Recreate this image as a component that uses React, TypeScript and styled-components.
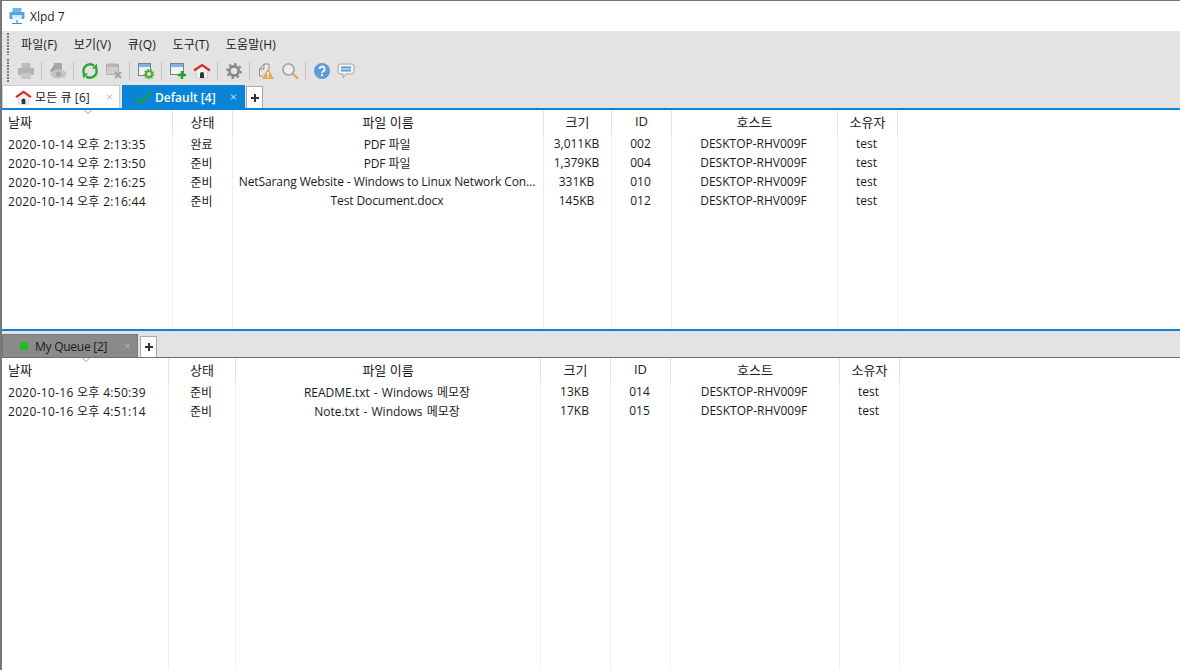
import React from "react";
import styled, { createGlobalStyle } from "styled-components";

const Global = createGlobalStyle`
  html, body { margin: 0; padding: 0; height: 100%; background: #fff; overflow: hidden; }
  #root { height: 100%; }
  * { box-sizing: border-box; }
`;

const Window = styled.div`
  width: 1180px; height: 670px; display: flex; flex-direction: column;
  border-top: 1px solid #777; border-left: 2px solid #777;
  font-family: "Open Sans", "Noto Sans CJK KR", sans-serif; font-size: 12px; color: #1a1a1a;
  background: #fff;
`;
const TitleBar = styled.div`
  height: 30px; display: flex; align-items: center; padding-left: 7px; gap: 5px; font-size: 12px; background: #fff;
`;
const MenuBar = styled.div`
  height: 26px; background: #e3e3e3; display: flex; align-items: center; position: relative; padding-left: 19px; gap: 16.5px;
`;
const Grip = styled.span`
  position: absolute; left: 5px; top: 2px; bottom: 2px; width: 2px;
  background: repeating-linear-gradient(to bottom, #777 0 2px, transparent 2px 3px);
`;
const MenuItem = styled.span` font-size: 12px; letter-spacing: 0.2px; `;
const ToolBar = styled.div`
  height: 28px; background: #e3e3e3; display: flex; align-items: center; position: relative; padding-left: 12px;
`;
const ToolIcon = styled.span`
  width: 24px; height: 20px; display: flex; align-items: center; justify-content: center; flex: none;
`;
const ToolSep = styled.span`
  width: 1px; height: 18px; background: #c6c6c6; margin: 0 4px 0 3px; flex: none;
`;
const TabStrip = styled.div<{ $h: number; $line: string; $lh: number }>`
  height: ${p => p.$h}px; background: #e3e3e3; display: flex; align-items: flex-end;
  border-bottom: ${p => p.$lh}px solid ${p => p.$line}; gap: 2px; flex: none;
`;
const Tab = styled.div<{ $w: number; $bg: string; $fg: string; $bold?: boolean; $h: number; $pl: number; $border?: string; $ls?: number }>`
  width: ${p => p.$w}px; height: ${p => p.$h}px; background: ${p => p.$bg}; color: ${p => p.$fg};
  font-weight: ${p => (p.$bold ? 600 : 400)}; display: flex; align-items: center; position: relative; padding-left: ${p => p.$pl}px; gap: 3px;
  border: 1px solid ${p => p.$border ?? p.$bg}; border-bottom: none; flex: none; font-size: 12px;
  letter-spacing: ${p => p.$ls ?? 0}px;
`;
const TabClose = styled.svg<{ $r: number }>`
  position: absolute; right: ${p => p.$r}px; top: 50%; transform: translateY(-50%);
`;
const AddTab = styled.div<{ $h: number; $ml: number }>`
  width: 17px; height: ${p => p.$h}px; background: #fff; border: 1px solid #aaa; border-bottom: none; flex: none; margin-left: ${p => p.$ml}px;
  display: flex; align-items: center; justify-content: center;
`;
const Dot = styled.span`
  width: 8px; height: 8px; border-radius: 50%; background: #14c414; margin-right: 4px; flex: none;
`;
const Table = styled.div<{ $h: number }>`
  height: ${p => p.$h}px; display: flex; background: #fff; flex: none;
`;
const Column = styled.div<{ $w: number }>`
  width: ${p => p.$w}px; flex: none; border-right: 1px solid #e6f1fa; display: flex; flex-direction: column; position: relative;
`;
const HeaderCell = styled.div<{ $align: string; $h: number }>`
  height: ${p => p.$h}px; margin-right: -1px; border-right: 1px solid #e3e3e3; display: flex; align-items: center;
  justify-content: ${p => p.$align}; padding: 0 6px 2px; flex: none; color: #222; font-size: 13px;
`;
const Cell = styled.div<{ $first: boolean; $ls: number; $ws: number }>`
  height: 19px; display: flex; align-items: center; justify-content: ${p => (p.$first ? "flex-start" : "center")};
  padding: 0 ${p => (p.$first ? 6 : 8)}px 0 6px; white-space: pre; overflow: hidden; flex: none;
  letter-spacing: ${p => p.$ls}px; word-spacing: ${p => p.$ws}px;
`;
const Chevron = styled.svg<{ $x: number }>`
  position: absolute; left: ${p => p.$x}px; top: 0;
`;
const Divider = styled.div`
  height: 2px; background: #0a84d8; flex: none;
`;

const Printer = () => (
  <svg width="18" height="18" viewBox="0 0 18 18">
    <rect x="4.5" y="1" width="9" height="5" fill="#bdbdbd" />
    <rect x="1" y="6" width="16" height="7" rx="1" fill="#b3b3b3" />
    <rect x="4" y="11" width="10" height="6" fill="#c8c8c8" />
  </svg>
);
const Hide = () => (
  <svg width="18" height="18" viewBox="0 0 18 18">
    <path d="M5 1h8v8H5z" fill="#a8a8a8" />
    <path d="M1 9l4-6v9z" fill="#a0a0a0" />
    <ellipse cx="9.5" cy="12" rx="8" ry="4.5" fill="#c4c4c4" />
    <circle cx="9.5" cy="12" r="2.6" fill="#a6a6a6" />
  </svg>
);
const Refresh = () => (
  <svg width="18" height="18" viewBox="0 0 18 18" fill="none">
    <path d="M3 11.5A6.5 6.5 0 0 1 13 3.8" stroke="#2da52d" strokeWidth="2.4" />
    <path d="M15 6.5A6.5 6.5 0 0 1 5 14.2" stroke="#2da52d" strokeWidth="2.4" />
    <path d="M11 6.8l5.3-.3-.4-5z" fill="#2da52d" />
    <path d="M7 11.2l-5.3.3.4 5z" fill="#2da52d" />
  </svg>
);
const QueueDelete = () => (
  <svg width="18" height="18" viewBox="0 0 18 18" fill="none">
    <path d="M1.5 2h12v10.5h-12z" fill="#cecece" stroke="#b0b0b0" />
    <rect x="1.5" y="2" width="12" height="3" fill="#b5b5b5" />
    <path d="M10 10l6 6M16 10l-6 6" stroke="#a6a6a6" strokeWidth="2.4" />
  </svg>
);
const WinSettings = () => (
  <svg width="18" height="18" viewBox="0 0 18 18" fill="none">
    <rect x="1.5" y="1.5" width="12" height="12" fill="#f2f2f2" stroke="#808080" />
    <rect x="2" y="2" width="11" height="3" fill="#7fb2e5" />
    <circle cx="12" cy="12" r="3" stroke="#52a83a" strokeWidth="2" fill="#e3e3e3" />
    <circle cx="12" cy="12" r="4.6" stroke="#52a83a" strokeWidth="1.4" strokeDasharray="1.6 1.6" />
  </svg>
);
const WinAdd = () => (
  <svg width="18" height="18" viewBox="0 0 18 18" fill="none">
    <rect x="1.5" y="1.5" width="13" height="11" fill="#f2f2f2" stroke="#808080" />
    <rect x="2" y="2" width="12" height="3" fill="#7fb2e5" />
    <path d="M13 9v8M9 13h8" stroke="#22a02c" strokeWidth="2.4" />
  </svg>
);
const Home = ({ s = 18 }: { s?: number }) => (
  <svg width={s} height={s} viewBox="0 0 18 18" fill="none">
    <path d="M3.5 8v8h11V8L9 4z" fill="#f1f1f1" stroke="#bdbdbd" strokeWidth=".6" />
    <path d="M1 8.5L9 3l8 5.5" stroke="#d22c2c" strokeWidth="2.2" />
    <path d="M7 16v-4a2 2 0 0 1 4 0v4z" fill="#333" />
  </svg>
);
const Gear = () => (
  <svg width="18" height="18" viewBox="0 0 18 18" fill="none">
    <circle cx="9" cy="9" r="4.6" stroke="#858585" strokeWidth="2.6" />
    <circle cx="9" cy="9" r="6.8" stroke="#858585" strokeWidth="2.2" strokeDasharray="2.4 2.94" />
  </svg>
);
const Alert = () => (
  <svg width="18" height="18" viewBox="0 0 18 18" fill="none">
    <path d="M2.5 7L7 2h5v6M2.5 7v7H6M2.5 7H7V2" stroke="#8c8c8c" fill="#efefef" />
    <path d="M11 6.5l6 10.5H5z" fill="#e4a85c" />
    <path d="M11 10v3.5M11 14.6v1.2" stroke="#fff" strokeWidth="1.4" />
  </svg>
);
const Search = () => (
  <svg width="18" height="18" viewBox="0 0 18 18" fill="none">
    <circle cx="7.5" cy="7.5" r="5.6" fill="#efefef" stroke="#a9a9a9" strokeWidth="1.8" />
    <path d="M11.8 11.8l5 5" stroke="#d9a55c" strokeWidth="2.2" />
  </svg>
);
const Help = () => (
  <svg width="18" height="18" viewBox="0 0 18 18">
    <circle cx="9" cy="9" r="8" fill="#5f9bd8" />
    <path d="M6.6 7a2.5 2.5 0 1 1 3.7 2.2c-.9.5-1.3 1-1.3 1.9" fill="none" stroke="#fff" strokeWidth="1.8" />
    <rect x="8" y="12.2" width="2" height="2" fill="#fff" />
  </svg>
);
const Chat = () => (
  <svg width="18" height="18" viewBox="0 0 18 18" fill="none">
    <path d="M3 2h12a2 2 0 0 1 2 2v6a2 2 0 0 1-2 2H9l-3 4v-4H3a2 2 0 0 1-2-2V4a2 2 0 0 1 2-2z" fill="#f2f2f2" stroke="#a5a5a5" />
    <path d="M4 5.5h10M4 8.5h10" stroke="#5f9bd8" strokeWidth="2" />
  </svg>
);
const Check = () => (
  <svg width="16" height="13" viewBox="0 0 16 13" fill="none">
    <path d="M1 6.5l4.6 5L15 1" stroke="#1f9a3f" strokeWidth="2.6" />
  </svg>
);
const Plus = () => (
  <svg width="8" height="8" viewBox="0 0 8 8"><path d="M4 0v8M0 4h8" stroke="#333" strokeWidth="2" /></svg>
);
const AppLogo = () => (
  <svg width="16" height="18" viewBox="0 0 16 18">
    <rect x="3.5" y="1" width="9" height="5" fill="#6fb6ea" />
    <rect x="0.5" y="5" width="15" height="7" rx="1" fill="#4fa5e6" />
    <rect x="3" y="8" width="10" height="2" fill="#cfe8fa" />
    <rect x="3.5" y="10" width="9" height="3" fill="#e3f2fc" />
    <path d="M8 13v3M3 16.5h10" stroke="#3a92d8" strokeWidth="1.2" />
  </svg>
);
const CloseMark = ({ c, r }: { c: string; r: number }) => (
  <TabClose $r={r} width="7" height="7" viewBox="0 0 7 7">
    <path d="M1 1l5 5M6 1l-5 5" stroke={c} strokeWidth="1" fill="none" />
  </TabClose>
);

const menus = ["파일(F)", "보기(V)", "큐(Q)", "도구(T)", "도움말(H)"];
const headers = ["날짜", "상태", "파일 이름", "크기", "ID", "호스트", "소유자"];

const topRows = [
  ["2020-10-14 오후 2:13:35", "완료", "PDF 파일", "3,011KB", "002", "DESKTOP-RHV009F", "test"],
  ["2020-10-14 오후 2:13:50", "준비", "PDF 파일", "1,379KB", "004", "DESKTOP-RHV009F", "test"],
  ["2020-10-14 오후 2:16:25", "준비", "NetSarang Website - Windows to Linux Network Con...", "331KB", "010", "DESKTOP-RHV009F", "test"],
  ["2020-10-14 오후 2:16:44", "준비", "Test Document.docx", "145KB", "012", "DESKTOP-RHV009F", "test"],
];
const bottomRows = [
  ["2020-10-16 오후 4:50:39", "준비", "README.txt - Windows 메모장", "13KB", "014", "DESKTOP-RHV009F", "test"],
  ["2020-10-16 오후 4:51:14", "준비", "Note.txt - Windows 메모장", "17KB", "015", "DESKTOP-RHV009F", "test"],
];

type TableProps = { widths: number[]; rows: string[][]; height: number; headH: number; chevronX: number; nameLs: number; nameWs: number };

function QueueTable({ widths, rows, height, headH, chevronX, nameLs, nameWs }: TableProps) {
  return (
    <Table $h={height}>
      {headers.map((h, c) => (
        <Column key={h} $w={widths[c]}>
          <HeaderCell $h={headH} $align={c === 0 ? "flex-start" : "center"}>{h}</HeaderCell>
          {c === 0 && (
            <Chevron $x={chevronX} width="8" height="4" viewBox="0 0 8 4">
              <path d="M.5 0l3.5 3.5L7.5 0" fill="none" stroke="#999" />
            </Chevron>
          )}
          {rows.map((r, i) => (
            <Cell key={i} $first={c === 0} $ls={c === 0 ? 0.3 : c === 2 ? nameLs : 0} $ws={c === 2 ? nameWs : 0}>{r[c]}</Cell>
          ))}
        </Column>
      ))}
    </Table>
  );
}

export default function App() {
  return (
    <Window>
      <Global />
      <TitleBar><AppLogo />Xlpd 7</TitleBar>
      <MenuBar>
        <Grip />
        {menus.map(m => <MenuItem key={m}>{m}</MenuItem>)}
      </MenuBar>
      <ToolBar>
        <Grip />
        <ToolIcon><Printer /></ToolIcon>
        <ToolSep />
        <ToolIcon><Hide /></ToolIcon>
        <ToolSep />
        <ToolIcon><Refresh /></ToolIcon>
        <ToolIcon><QueueDelete /></ToolIcon>
        <ToolSep />
        <ToolIcon><WinSettings /></ToolIcon>
        <ToolSep />
        <ToolIcon><WinAdd /></ToolIcon>
        <ToolIcon><Home /></ToolIcon>
        <ToolSep />
        <ToolIcon><Gear /></ToolIcon>
        <ToolSep />
        <ToolIcon><Alert /></ToolIcon>
        <ToolIcon><Search /></ToolIcon>
        <ToolSep />
        <ToolIcon><Help /></ToolIcon>
        <ToolIcon><Chat /></ToolIcon>
      </ToolBar>
      <TabStrip $h={25} $line="#0a84d8" $lh={2}>
        <Tab $w={118} $h={23} $bg="#fff" $fg="#222" $pl={12} $border="#ccc" $ls={0.1}>
          <Home s={17} />모든 큐 [6]
          <CloseMark c="#aaa" r={6} />
        </Tab>
        <Tab $w={123} $h={23} $bg="#0a84d8" $fg="#fff" $bold $pl={13}>
          <Check />Default [4]
          <CloseMark c="#e8f3fc" r={7} />
        </Tab>
        <AddTab $h={22} $ml={-1}><Plus /></AddTab>
      </TabStrip>
      <QueueTable widths={[171, 60, 311, 68, 60, 166, 60]} rows={topRows} height={219} headH={24} chevronX={82} nameLs={-0.1} nameWs={0} />
      <Divider />
      <TabStrip $h={27} $line="#707070" $lh={1}>
        <Tab $w={136} $h={23} $bg="#8a8a8a" $fg="#1a1a1a" $pl={17} $border="#777" $ls={-0.25}>
          <Dot />My Queue [2]
          <CloseMark c="#bbb" r={6} />
        </Tab>
        <AddTab $h={21} $ml={0}><Plus /></AddTab>
      </TabStrip>
      <QueueTable widths={[167, 67, 305, 70, 60, 169, 60]} rows={bottomRows} height={312} headH={24} chevronX={80} nameLs={0} nameWs={1} />
    </Window>
  );
}
